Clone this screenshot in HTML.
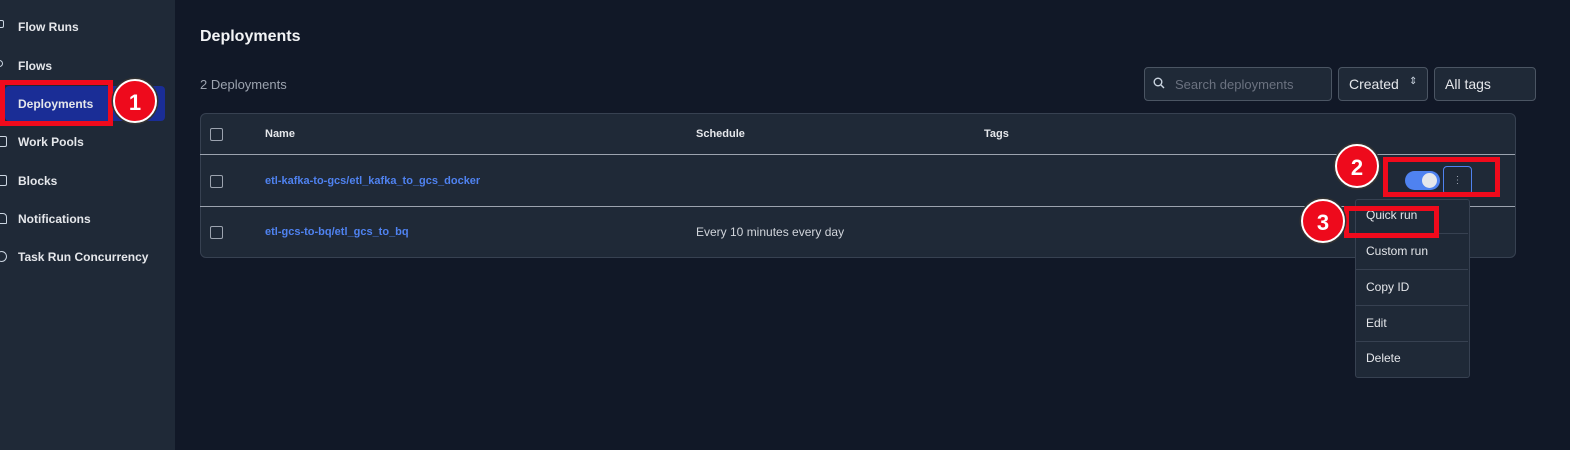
<!DOCTYPE html><html><head><style>
body{margin:0;width:1570px;height:450px;background:#111827;font-family:"Liberation Sans",sans-serif;position:relative;overflow:hidden;color:#e5e7eb}
.a{position:absolute}
.sb{left:0;top:0;width:175px;height:450px;background:#1f2937}
.ni{position:absolute;left:18px;font-size:12px;font-weight:bold;color:#e5e7eb}
.ic{position:absolute;left:-4px;width:9px;height:9px;border:1.5px solid #cbd5e1;border-radius:50%}
.red{position:absolute;border:5px solid #f00a1c;box-sizing:border-box}
.circ{position:absolute;width:44px;height:44px;border-radius:50%;background:#ee0a1c;border:2px solid #fff;box-shadow:0 0 0 1.5px #333;color:#fff;font-weight:bold;font-size:22px;text-align:center;line-height:44px;box-sizing:border-box}
.hr{position:absolute;left:200px;width:1315px;height:1px;background:#9ca3af}
.cb{position:absolute;left:210px;width:11px;height:11px;border:1px solid #9ca3af;border-radius:2px}
.mi{position:absolute;left:1366px;font-size:12px;color:#e5e7eb}
.ms{position:absolute;left:1355px;width:113px;height:1px;background:#374151}
</style></head><body>
<div class="a sb"></div>
<div class="ni" style="top:20px">Flow Runs</div>
<div class="ni" style="top:59px">Flows</div>
<div class="a" style="left:5px;top:86px;width:160px;height:35px;background:#1a2d96;border-radius:4px"></div>
<div class="ni" style="top:97px">Deployments</div>
<div class="ni" style="top:135px">Work Pools</div>
<div class="ni" style="top:174px">Blocks</div>
<div class="ni" style="top:212px">Notifications</div>
<div class="ni" style="top:250px">Task Run Concurrency</div>
<div class="ic" style="top:20px;border-radius:2px;width:6px;height:6px"></div>
<div class="ic" style="top:60px;width:5px;height:5px"></div>
<div class="ic" style="top:136px;border-radius:2px"></div>
<div class="ic" style="top:175px;border-radius:2px"></div>
<div class="ic" style="top:213px;border-radius:4px 4px 1px 1px"></div>
<div class="ic" style="top:251px"></div>
<div class="red" style="left:0;top:80px;width:113px;height:46px"></div>
<div class="circ" style="left:113px;top:79px">1</div>

<div class="a" style="left:200px;top:28px;font-size:16px;font-weight:bold;color:#f3f4f6">Deployments</div>
<div class="a" style="left:200px;top:77px;font-size:13px;color:#9ca3af">2 Deployments</div>
<div class="a" style="left:1144px;top:67px;width:186px;height:32px;border:1px solid #4b5563;border-radius:4px;background:#1f2937"></div>
<svg class="a" style="left:1153px;top:77px" width="12" height="12" viewBox="0 0 12 12"><circle cx="5" cy="5" r="3.8" stroke="#cbd5e1" stroke-width="1.4" fill="none"/><path d="M8 8l3 3" stroke="#cbd5e1" stroke-width="1.4"/></svg>
<div class="a" style="left:1175px;top:77px;font-size:13px;color:#6b7280">Search deployments</div>
<div class="a" style="left:1338px;top:67px;width:88px;height:32px;border:1px solid #4b5563;border-radius:4px;background:#1f2937"></div>
<div class="a" style="left:1349px;top:76px;font-size:14px">Created</div>
<div class="a" style="left:1409px;top:76px;font-size:10px;color:#cbd5e1">⇕</div>
<div class="a" style="left:1434px;top:67px;width:100px;height:32px;border:1px solid #4b5563;border-radius:4px;background:#1f2937"></div>
<div class="a" style="left:1445px;top:76px;font-size:14px">All tags</div>

<div class="a" style="left:200px;top:113px;width:1314px;height:143px;background:#1f2937;border:1px solid #374151;border-radius:6px"></div>
<div class="hr" style="top:154px"></div>
<div class="hr" style="top:206px"></div>
<div class="cb" style="top:128px"></div><div class="cb" style="top:175px"></div><div class="cb" style="top:226px"></div>
<div class="a" style="left:265px;top:128px;font-size:11px;font-weight:bold">Name</div>
<div class="a" style="left:696px;top:128px;font-size:11px;font-weight:bold">Schedule</div>
<div class="a" style="left:984px;top:128px;font-size:11px;font-weight:bold">Tags</div>
<div class="a" style="left:265px;top:175px;font-size:11px;font-weight:bold;color:#4f82f0">etl-kafka-to-gcs/etl_kafka_to_gcs_docker</div>
<div class="a" style="left:265px;top:226px;font-size:11px;font-weight:bold;color:#4f82f0">etl-gcs-to-bq/etl_gcs_to_bq</div>
<div class="a" style="left:696px;top:225px;font-size:12px;color:#d1d5db">Every 10 minutes every day</div>

<div class="a" style="left:1405px;top:171px;width:35px;height:19px;border-radius:10px;background:#4f82f0"></div>
<div class="a" style="left:1422px;top:173px;width:15px;height:15px;border-radius:50%;background:#e5e7eb"></div>
<div class="a" style="left:1443px;top:166px;width:27px;height:27px;border:1.5px solid #4f82f0;border-radius:4px;background:#1f2937;color:#9ca3af;font-size:10px;text-align:center;line-height:27px">⋮</div>
<div class="red" style="left:1383px;top:157px;width:117px;height:40px"></div>
<div class="circ" style="left:1335px;top:144px">2</div>

<div class="a" style="left:1355px;top:199px;width:113px;height:177px;background:#1f2937;border:1px solid #374151;border-radius:3px"></div>
<div class="ms" style="top:233px"></div><div class="ms" style="top:269px"></div><div class="ms" style="top:305px"></div><div class="ms" style="top:341px"></div>
<div class="mi" style="top:208px">Quick run</div>
<div class="mi" style="top:244px">Custom run</div>
<div class="mi" style="top:280px">Copy ID</div>
<div class="mi" style="top:316px">Edit</div>
<div class="mi" style="top:351px">Delete</div>
<div class="red" style="left:1344px;top:206px;width:95px;height:32px"></div>
<div class="circ" style="left:1301px;top:199px">3</div>
</body></html>
